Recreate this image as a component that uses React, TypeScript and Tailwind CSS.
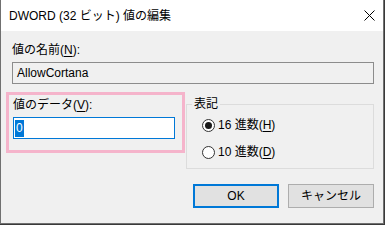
export default function App() {
  return (
    <div className="w-[385px] h-[225px] bg-[#3a3a3a] overflow-hidden font-['Liberation_Sans','Noto_Sans_CJK_JP',sans-serif] text-[12px] leading-[16px] text-black">
      <div className="w-[384px] h-[224px] flex flex-col bg-[#f0f0f0] border-x border-b border-[#707070]">
        {/* title bar */}
        <div className="h-[31px] shrink-0 bg-white flex items-center justify-between pl-[8px] pr-[8px]">
          <span className="pt-[1px]">DWORD (32 ビット) 値の編集</span>
          <svg width="11" height="11" viewBox="0 0 11 11" className="text-black">
            <path d="M0.5 0.5 L10.5 10.5 M10.5 0.5 L0.5 10.5" stroke="currentColor" strokeWidth="1" />
          </svg>
        </div>

        <div className="flex-1 pl-[11px] pr-[9px] pt-[11px]">
          <div>
            値の名前(<span className="underline underline-offset-2">N</span>):
          </div>
          <div className="mt-[4px] h-[22px] border border-[#8c8c8c] bg-[#f0f0f0] pl-[4px] flex items-center">
            AllowCortana
          </div>

          <div className="mt-[8px] flex items-start">
            <div className="-ml-[6px] w-[180px] border-[3px] border-[#f5b4cb] pl-[4px] pt-[2px] pb-[11px]">
              <div>
                値のデータ(<span className="underline underline-offset-2">V</span>):
              </div>
              <div className="mt-[4px] w-[162px] h-[22px] border border-[#0078d7] bg-white pl-[1px] flex items-center">
                <span className="bg-[#0078d7] text-white leading-[17px] px-[1px]">0</span>
              </div>
            </div>

            <fieldset className="mt-[4px] ml-[1px] w-[189px] h-[73px] border border-[#dcdcdc] pl-[15px]">
              <legend className="ml-[-10px] px-[2px]">表記</legend>
              <label className="mt-[5px] flex items-center gap-[3px]">
                <span className="w-[13px] h-[13px] rounded-full border border-[#333] bg-white flex items-center justify-center">
                  <span className="w-[7px] h-[7px] rounded-full bg-[#1a1a1a]" />
                </span>
                <span>
                  16 進数(<span className="underline underline-offset-2">H</span>)
                </span>
              </label>
              <label className="mt-[11px] flex items-center gap-[3px]">
                <span className="w-[13px] h-[13px] rounded-full border border-[#333] bg-white" />
                <span>
                  10 進数(<span className="underline underline-offset-2">D</span>)
                </span>
              </label>
            </fieldset>
          </div>

          <div className="mt-[15px] flex justify-end gap-[9px]">
            <button className="w-[86px] h-[24px] border-2 border-[#0078d7] bg-[#e1e1e1]">OK</button>
            <button className="w-[86px] h-[24px] border border-[#adadad] bg-[#e1e1e1]">キャンセル</button>
          </div>
        </div>
      </div>
    </div>
  );
}
